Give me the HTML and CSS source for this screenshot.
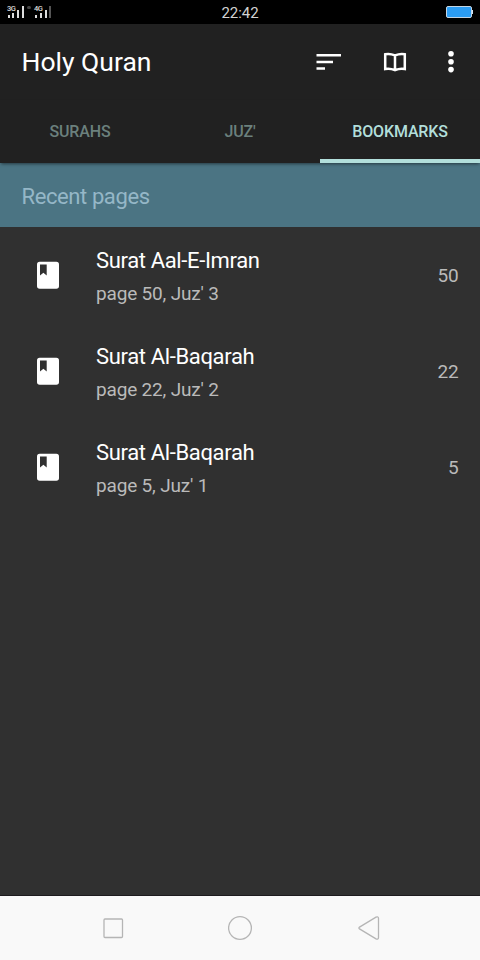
FILE: index.html
```html
<!DOCTYPE html>
<html lang="en">
<head>
<meta charset="utf-8">
<title>Holy Quran</title>
<link rel="stylesheet" href="styles.css">
</head>
<body>
<div class="screen">
  <header class="status">
    <div class="signals">
      <div class="signal"><span class="net">3G</span><svg width="18" height="18" viewBox="0 0 18 18"><path d="M1 15h2v3H1zM5 13h2v5H5zM10 10h2v8h-2zM15 6h2v12h-2z" fill="#ddd"/></svg></div>
      <i class="dot"></i>
      <div class="signal"><span class="net">4G</span><svg width="18" height="18" viewBox="0 0 18 18"><path d="M1 15h2v3H1zM6 13h2v5H6zM11 10h2v8h-2z" fill="#ddd"/><path d="M15 6h2v12h-2z" fill="#555"/></svg></div>
    </div>
    <span class="clock">22:42</span>
    <svg class="battery" width="28" height="14" viewBox="0 0 28 14"><rect x=".5" y="1.5" width="25" height="11" rx="1.5" fill="#2b9df4" stroke="#c3d5e4"/><path d="M26 5h1v4h-1z" fill="#d5e5f2"/></svg>
  </header>
  <div class="appbar">
    <h1 class="title">Holy Quran</h1>
    <svg class="sort" width="26" height="18" viewBox="0 0 26 18"><path d="M.5 1H25v2.6H.5zM.5 7.7H17v2.6H.5zM.5 14.2H9v2.6H.5z" fill="#fff"/></svg>
    <svg class="book" width="24" height="22" viewBox="0 0 24 22"><path d="M12 4.4Q7 2.2 2.2 3.2V18Q7 17 12 19.2Q17 17 21.8 18V3.2Q17 2.2 12 4.4V18.8" fill="none" stroke="#fff" stroke-width="2.5"/></svg>
    <svg class="more" width="6" height="22" viewBox="0 0 6 22"><g fill="#fff"><circle cx="3" cy="2.8" r="2.8"/><circle cx="3" cy="10.7" r="2.8"/><circle cx="3" cy="18.6" r="2.8"/></g></svg>
  </div>
  <nav class="tabs">
    <span class="tab">SURAHS</span>
    <span class="tab">JUZ'</span>
    <span class="tab active">BOOKMARKS</span>
  </nav>
  <h2 class="section">Recent pages</h2>
  <main class="list">
    <div class="row">
      <svg class="mark" width="22" height="28" viewBox="0 0 22 28"><rect y=".7" width="22" height="27" rx="2.7" fill="#fff"/><path d="M3 3.5h6.7v11l-3.3-2.8L3 14.5z" fill="#303030"/></svg>
      <div class="info"><div class="name">Surat Aal-E-Imran</div><div class="meta">page 50, Juz' 3</div></div>
      <span class="page">50</span>
    </div>
    <div class="row">
      <svg class="mark" width="22" height="28" viewBox="0 0 22 28"><rect y=".7" width="22" height="27" rx="2.7" fill="#fff"/><path d="M3 3.5h6.7v11l-3.3-2.8L3 14.5z" fill="#303030"/></svg>
      <div class="info"><div class="name">Surat Al-Baqarah</div><div class="meta">page 22, Juz' 2</div></div>
      <span class="page">22</span>
    </div>
    <div class="row">
      <svg class="mark" width="22" height="28" viewBox="0 0 22 28"><rect y=".7" width="22" height="27" rx="2.7" fill="#fff"/><path d="M3 3.5h6.7v11l-3.3-2.8L3 14.5z" fill="#303030"/></svg>
      <div class="info"><div class="name">Surat Al-Baqarah</div><div class="meta">page 5, Juz' 1</div></div>
      <span class="page">5</span>
    </div>
  </main>
  <footer class="navbar">
    <svg width="26" height="26" viewBox="0 0 26 26"><rect x="4" y="4" width="18.5" height="18.5" rx="1" class="line"/></svg>
    <svg width="26" height="26" viewBox="0 0 26 26"><circle cx="12" cy="13" r="11.4" class="line"/></svg>
    <svg width="26" height="26" viewBox="0 0 26 26"><path d="M3.5 12.1 20 2.2Q22.5 1.2 22.5 3.5V22.5Q22.5 24.8 20 23.8L3.5 13.9Q2.3 13 3.5 12.1z" class="line"/></svg>
  </footer>
</div>
</body>
</html>
```

FILE: styles.css
```css
* { box-sizing: border-box; }
body { margin: 0; background: #303030; font-family: Roboto, sans-serif; }
svg { display: block; flex: none; }
.screen { width: 480px; height: 960px; display: flex; flex-direction: column; overflow: hidden; }
.status { height: 24px; background: #000; display: grid; grid-template-columns: 1fr auto 1fr; align-items: center; padding: 0 6px; }
.signals { display: flex; height: 24px; align-items: flex-start; }
.signal { position: relative; width: 21px; height: 18px; }
.signal svg { margin-left: 1px; }
.signal:last-child { width: 19px; }
.net { position: absolute; left: 1px; top: 5px; font-size: 7.5px; line-height: 7px; color: #ddd; background: #000; letter-spacing: -.4px; font-weight: 500; }
.dot { width: 4px; height: 3px; margin-top: 6px; margin-right: 2px; border-radius: 2px; background: #444; }
.clock { font-size: 15px; line-height: 18px; color: #d2d2d2; padding-top: 2px; letter-spacing: -.05px; }
.battery { justify-self: end; }
.appbar { height: 76px; background: #212121; display: flex; align-items: center; padding: 0 26px 0 21.5px; }
.title { flex: 1; margin: 0; font-size: 26.5px; font-weight: 400; color: #fff; line-height: 32px; }
.sort { margin-right: 41px; }
.book { margin-right: 41px; }
.tabs { height: 63px; background: #212121; display: grid; grid-template-columns: repeat(3, 1fr); flex: none; position: relative; box-shadow: 0 2px 3px -1px rgba(0, 0, 0, .5); }
.tab { text-align: center; font-size: 16px; line-height: 64px; color: #6b807d; font-weight: 500; height: 63px; letter-spacing: -.15px; }
.active { color: #b2dfdb; border-bottom: 4px solid #b2dfdb; }
.section { margin: 0; height: 64px; background: #4b7483; color: #95b7c7; font-size: 22px; line-height: 67px; font-weight: 400; padding-left: 21.5px; letter-spacing: -.4px; }
.list { flex: 1; }
.row { height: 96px; display: flex; align-items: center; padding: 0 21.5px 0 37px; }
.info { margin-left: 37px; padding-top: 4px; flex: 1; }
.name { font-size: 22px; line-height: 32px; color: #fff; letter-spacing: -.35px; }
.meta { font-size: 19px; line-height: 33px; color: #bababa; letter-spacing: -.18px; }
.page { font-size: 19px; line-height: 28px; color: #bababa; padding-top: 2px; letter-spacing: -.2px; }
.navbar { height: 64px; background: #f9f9f9; box-shadow: 0 -1px 0 #1d1b1e; display: flex; justify-content: space-between; align-items: center; padding: 0 98px 0 100px; }
.line { fill: none; stroke: #b5b5b5; stroke-width: 1.3; }
```
